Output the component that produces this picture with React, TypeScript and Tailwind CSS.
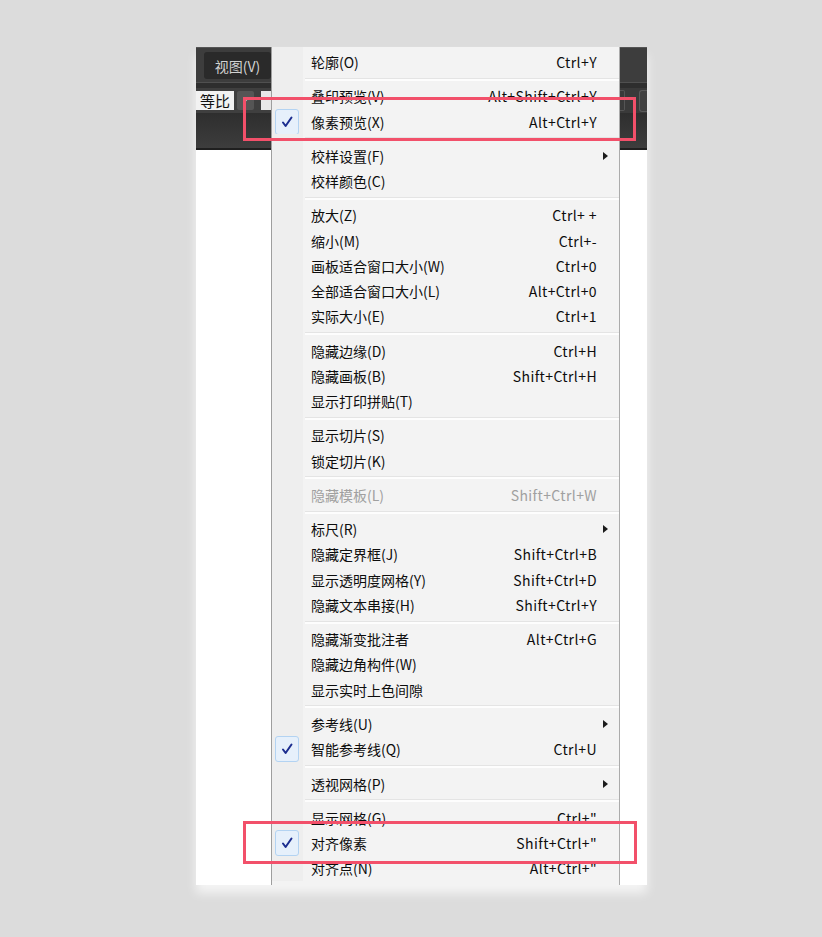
import React from 'react';

type Item = { l: string; s?: string; c?: boolean; sub?: boolean; d?: boolean };

const groups: Item[][] = [
  [{ l: '轮廓(O)', s: 'Ctrl+Y' }],
  [
    { l: '叠印预览(V)', s: 'Alt+Shift+Ctrl+Y' },
    { l: '像素预览(X)', s: 'Alt+Ctrl+Y', c: true },
  ],
  [{ l: '校样设置(F)', sub: true }, { l: '校样颜色(C)' }],
  [
    { l: '放大(Z)', s: 'Ctrl+ +' },
    { l: '缩小(M)', s: 'Ctrl+-' },
    { l: '画板适合窗口大小(W)', s: 'Ctrl+0' },
    { l: '全部适合窗口大小(L)', s: 'Alt+Ctrl+0' },
    { l: '实际大小(E)', s: 'Ctrl+1' },
  ],
  [
    { l: '隐藏边缘(D)', s: 'Ctrl+H' },
    { l: '隐藏画板(B)', s: 'Shift+Ctrl+H' },
    { l: '显示打印拼贴(T)' },
  ],
  [{ l: '显示切片(S)' }, { l: '锁定切片(K)' }],
  [{ l: '隐藏模板(L)', s: 'Shift+Ctrl+W', d: true }],
  [
    { l: '标尺(R)', sub: true },
    { l: '隐藏定界框(J)', s: 'Shift+Ctrl+B' },
    { l: '显示透明度网格(Y)', s: 'Shift+Ctrl+D' },
    { l: '隐藏文本串接(H)', s: 'Shift+Ctrl+Y' },
  ],
  [
    { l: '隐藏渐变批注者', s: 'Alt+Ctrl+G' },
    { l: '隐藏边角构件(W)' },
    { l: '显示实时上色间隙' },
  ],
  [{ l: '参考线(U)', sub: true }, { l: '智能参考线(Q)', s: 'Ctrl+U', c: true }],
  [{ l: '透视网格(P)', sub: true }],
  [
    { l: '显示网格(G)', s: 'Ctrl+"' },
    { l: '对齐像素', s: 'Shift+Ctrl+"', c: true },
    { l: '对齐点(N)', s: 'Alt+Ctrl+"' },
  ],
];

function Check() {
  return (
    <div className="w-[24px] h-[26px] ml-[3px] rounded-[3px] border border-[#b3d3f2] bg-[#e6f0fb] flex items-center justify-center">
      <svg width="12" height="12" viewBox="0 0 12 12">
        <path d="M2 6.5 L4.6 10 L10.5 1.5" fill="none" stroke="#1c2d8f" strokeWidth="2" strokeLinecap="round" strokeLinejoin="round" />
      </svg>
    </div>
  );
}

function Row({ it }: { it: Item }) {
  return (
    <div className="flex h-[25.2px] items-stretch">
      <div className="w-[31px] shrink-0 bg-[#eeeeee] flex items-center">{it.c && <Check />}</div>
      <div
        className={`flex-1 flex items-center pl-[8px] leading-none text-[14px] ${
          it.d ? 'text-[#a0a0a0]' : 'text-[#0d0d0d]'
        }`}
      >
        <span className="flex-1 whitespace-nowrap">{it.l}</span>
        {it.s && <span className="whitespace-nowrap tracking-[0.4px]">{it.s}</span>}
        <span className="w-[22px] shrink-0 flex items-center pl-[6px]">
          {it.sub && (
            <svg width="5" height="8" viewBox="0 0 5 8">
              <path d="M0 0 L5 4 L0 8 Z" fill="#1b1b1b" />
            </svg>
          )}
        </span>
      </div>
    </div>
  );
}

function Sep() {
  return (
    <div className="flex h-[9.2px] items-stretch">
      <div className="w-[31px] shrink-0 bg-[#eeeeee]" />
      <div className="flex-1 flex flex-col justify-center pl-[2px]">
        <div className="h-px bg-[#e4e4e4]" />
        <div className="h-[2px] bg-[#fdfdfd]" />
      </div>
    </div>
  );
}

export default function App() {
  return (
    <div className="relative w-[822px] h-[937px] bg-[#dcdcdc] pl-[196px] pt-[47px] overflow-hidden font-['Noto_Sans_CJK_SC','Microsoft_YaHei',sans-serif]">
      <div className="flex w-[451px] h-[838px] bg-white shadow-[0_8px_10px_rgba(255,255,255,0.7)]">
        {/* left toolbar piece */}
        <div className="w-[75px] shrink-0 flex flex-col">
          <div className="h-[35px] bg-[#3d3d3d] border-t border-[#555555] pl-[8px] pt-[4px]">
            <div className="w-[67px] h-[27px] bg-[#2a2a2a] rounded-[3px] flex items-center justify-center text-[14px] leading-none text-[#d2d2d2]">
              视图(V)
            </div>
          </div>
          <div className="h-[6px] bg-[#2e2e2e] border-t border-[#505050]" />
          <div className="h-[25px] bg-[#3f3f3f] flex items-center">
            <div className="w-[38px] h-[19px] bg-[#f2f2f2] flex items-center justify-center text-[15px] leading-none text-[#111]">
              等比
            </div>
            <div className="ml-[3px] w-[17px] h-[19px] bg-[#555555] rounded-[2px] flex items-center justify-center">
              <svg width="5" height="3" viewBox="0 0 5 3">
                <path d="M0 0 L5 0 L2.5 3 Z" fill="#cfcfcf" />
              </svg>
            </div>
            <div className="ml-[7px] w-[10px] h-[19px] bg-[#e8e8e8]" />
          </div>
          <div className="h-[35px] bg-gradient-to-b from-[#2e2e2e] to-[#3d3d3d]" />
          <div className="h-[2px] bg-[#1f1f1f]" />
          <div className="flex-1 bg-white" />
        </div>

        {/* menu */}
        <div className="w-[349px] shrink-0 border-l border-r border-l-[#9e9e9e] border-r-[#ababab] bg-[#f3f3f3] overflow-hidden">
          <div className="flex h-[2.4px]">
            <div className="w-[31px] bg-[#eeeeee]" />
          </div>
          {groups.map((g, gi) => (
            <React.Fragment key={gi}>
              {gi > 0 && <Sep />}
              {g.map((it, i) => (
                <Row key={i} it={it} />
              ))}
            </React.Fragment>
          ))}
        </div>

        {/* right toolbar piece */}
        <div className="w-[27px] shrink-0 flex flex-col">
          <div className="h-[35px] bg-[#3d3d3d] border-t border-[#555555]" />
          <div className="h-[6px] bg-[#2e2e2e] border-t border-[#505050]" />
          <div className="h-[25px] bg-[#3a3a3a] flex items-center">
            <div className="w-[5px] h-[21px] border border-l-0 border-[#555] rounded-r-[2px]" />
            <div className="ml-[14px] w-[8px] h-[22px] border border-r-0 border-[#5a5a5a] bg-[#404040] rounded-l-[3px]" />
          </div>
          <div className="h-[35px] bg-gradient-to-b from-[#2e2e2e] to-[#3d3d3d]" />
          <div className="h-[2px] bg-[#1f1f1f]" />
          <div className="flex-1 bg-white" />
        </div>
      </div>

      {/* red highlight frames */}
      <div className="absolute left-[243px] top-[97px] w-[393px] h-[44px] border-[3px] border-[#f2506a]" />
      <div className="absolute left-[243px] top-[821px] w-[394px] h-[43px] border-[3px] border-[#f2506a]" />
    </div>
  );
}
